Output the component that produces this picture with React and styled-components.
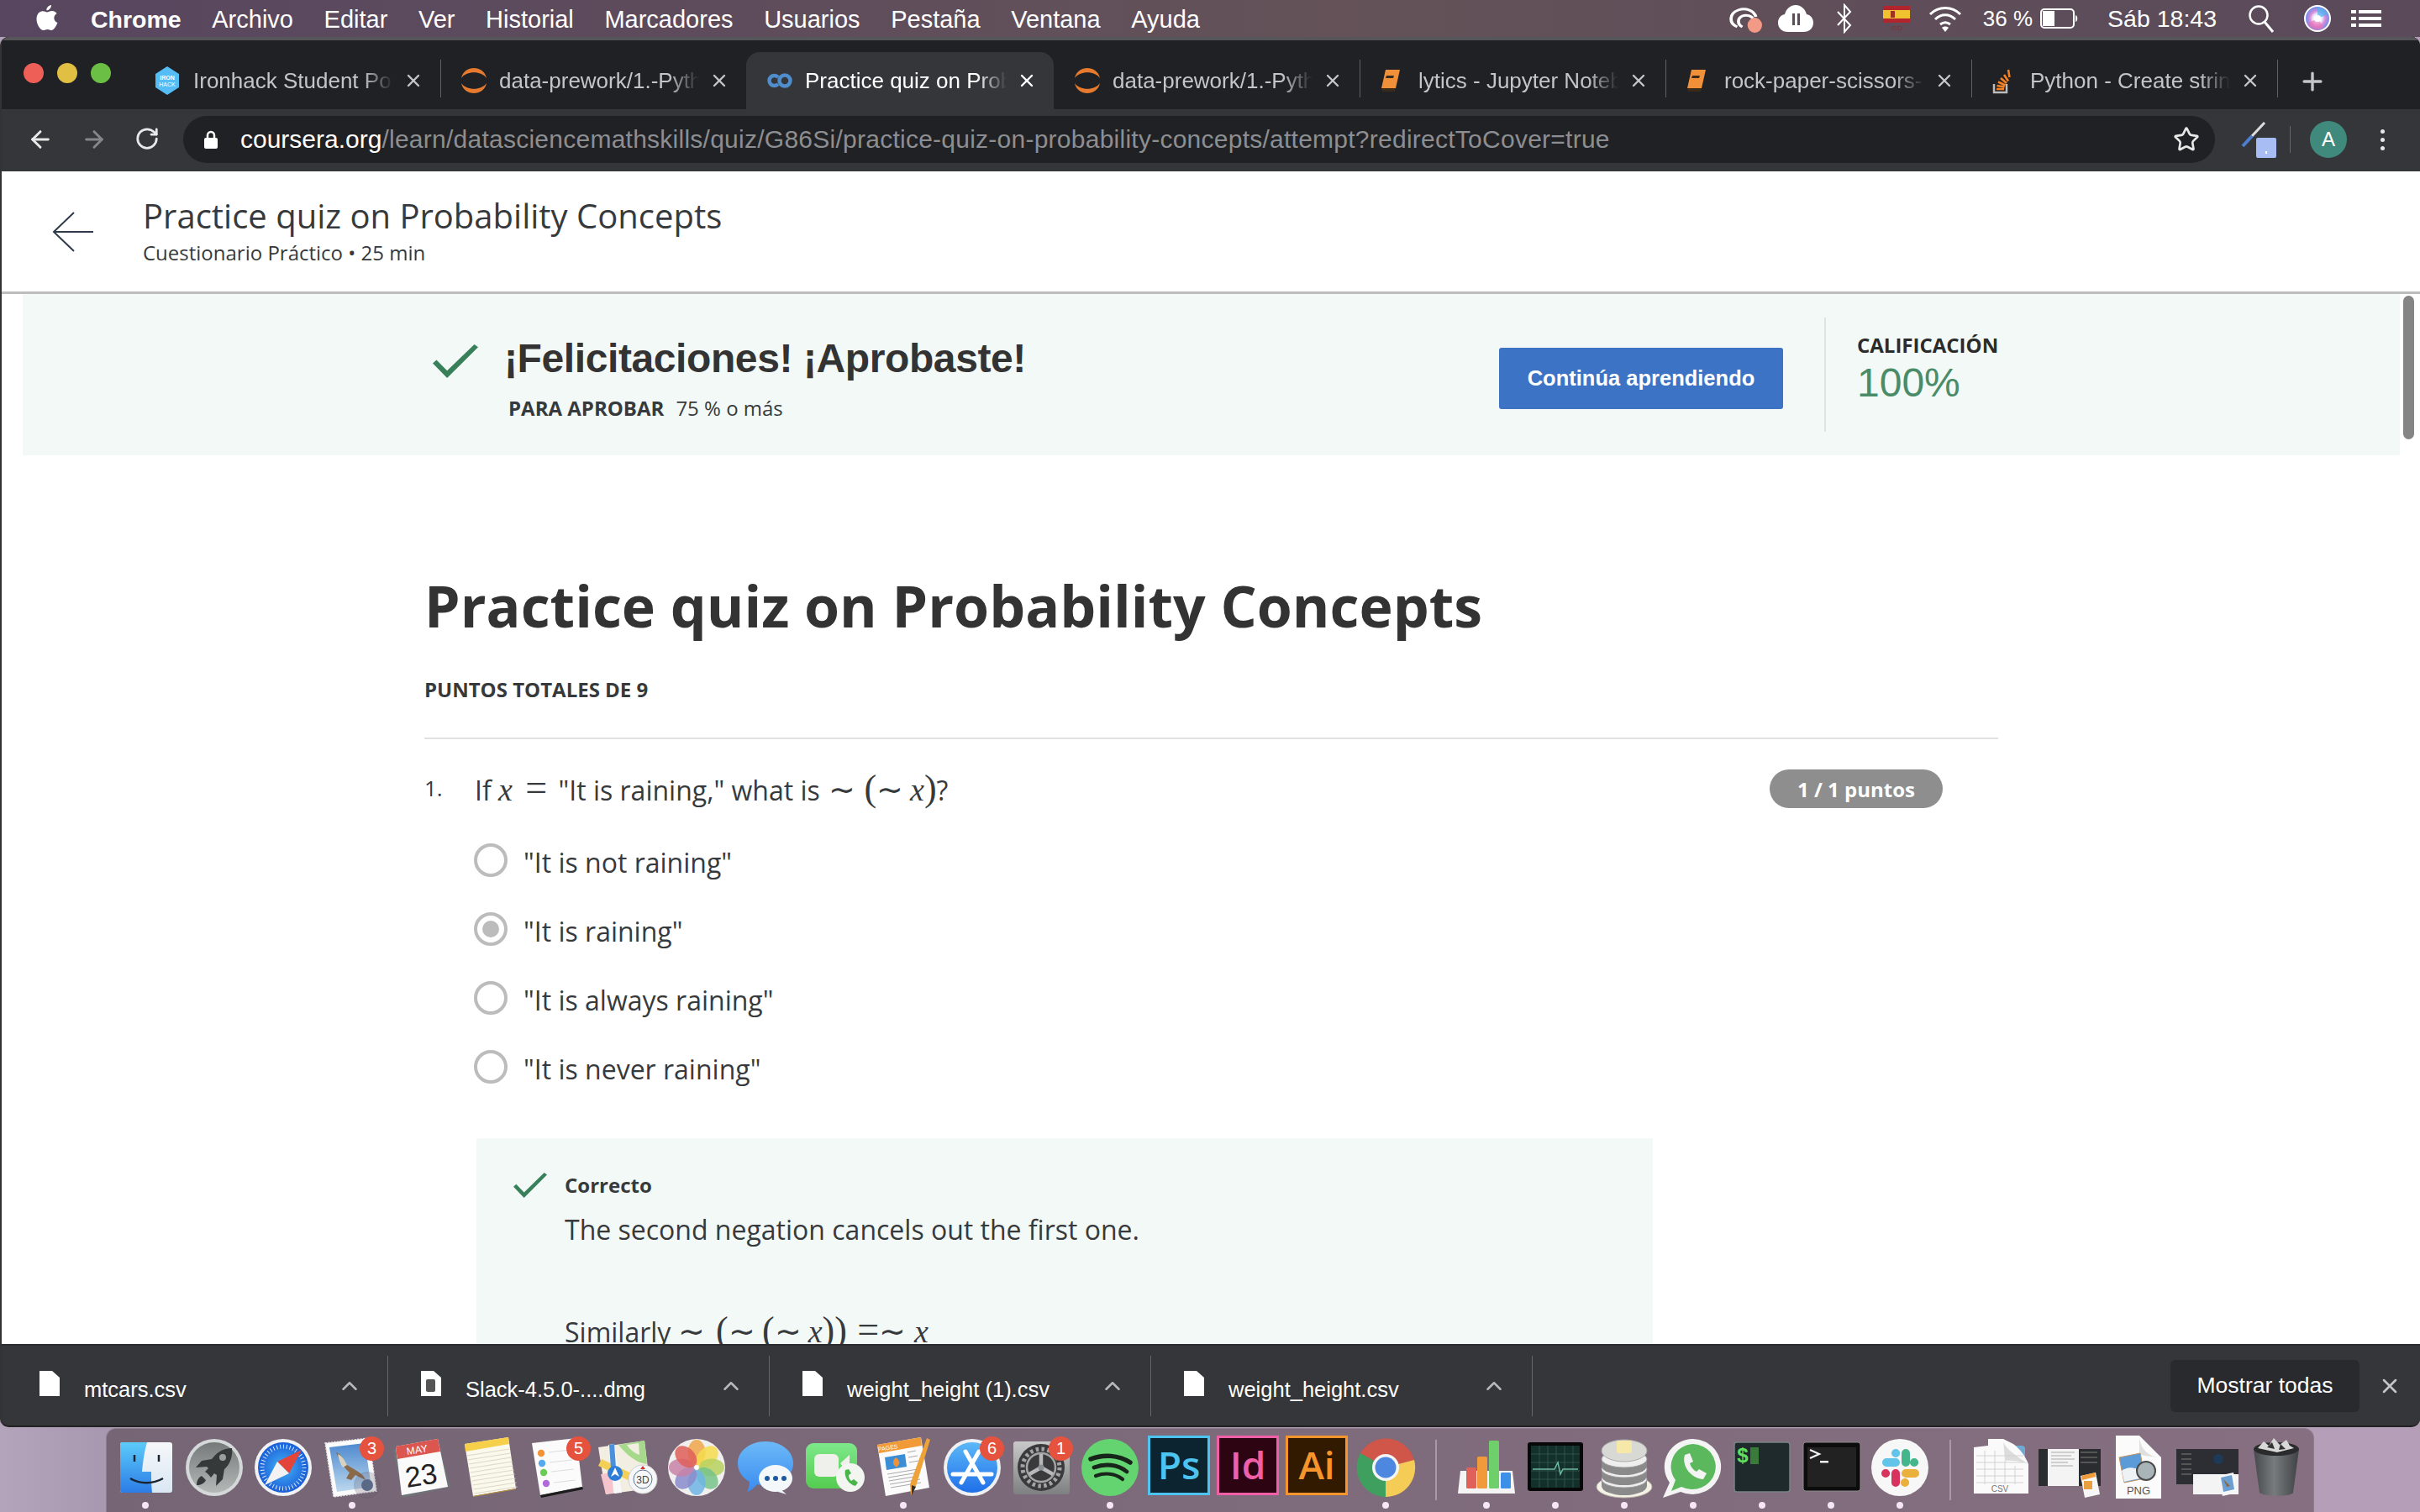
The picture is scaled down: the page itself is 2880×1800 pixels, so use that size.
import React from 'react';
import styled, { createGlobalStyle } from 'styled-components';
import { ArrowLeft, ArrowRight, RotateCw, Star, Plus, X, ChevronUp } from 'lucide-react';

const Global = createGlobalStyle`
  html, body { margin: 0; padding: 0; background: #b3a3bb; }
  * { box-sizing: border-box; }
`;

const UI = '"Liberation Sans", Arial, sans-serif';
const BODY = '"Open Sans", "Noto Sans", sans-serif';

/* ---------- menu bar drawings ---------- */
const AppleLogo = () => (
  <svg width="26" height="32" viewBox="0 0 26 32"><path fill="#fff" d="M18 0c.3 3-2.500 6.500-5.600 6.300C12 3.300 15 .3 18 0zM13 8.400c1.500 0 3.300-1.500 6-1.500 2 0 4.200 1 5.600 3-4.800 2.800-4 9.300.9 11.200-1.300 3.400-4.200 9-7.200 9-1.800 0-2.500-1.200-4.800-1.200s-3 1.200-4.800 1.200C5 30.100.500 23 .500 16.700.500 11 4 7.300 7.700 7.300c2.300 0 4 1.100 5.300 1.100z" /></svg>
);
const CloudApp = () => (
  <svg width="42" height="36" viewBox="0 0 34 36" preserveAspectRatio="none"><g fill="none" stroke="#fff" strokeWidth="3"><path d="M10 28C2 24 2 12 11 8c7-3 15 0 17 8" /><path d="M15 28c-5-3-5-10 0-13 4-2 9 0 10 3" /></g><ellipse cx="27" cy="26" rx="7" ry="9" fill="#f29a85" /></svg>
);
const CloudPause = () => (
  <svg width="42" height="34" viewBox="0 0 42 34"><path fill="#fff" d="M12 33C4 33 0 28 0 22c0-5 3-9 8-10C10 5 15 1 21 1s11 4 13 11c5 1 8 5 8 10 0 6-4 11-12 11z" /><rect x="17" y="11" width="3" height="14" fill="#5c4c5c" /><rect x="23" y="11" width="3" height="14" fill="#5c4c5c" /></svg>
);
const BluetoothMark = () => (
  <svg width="20" height="36" viewBox="0 0 20 36"><path fill="none" stroke="#fff" strokeWidth="2" d="M2 10l15 16-7 8V2l7 8L2 26" /></svg>
);
const SpainFlag = () => (
  <svg width="32" height="30" viewBox="0 0 32 30">
    <rect y="0" width="32" height="20" fill="#b3252c" /><rect y="5" width="32" height="10" fill="#f0c22f" /><rect x="9" y="6" width="5" height="8" fill="#a03020" />
    <text x="16" y="29" fontSize="8" textAnchor="middle" fill="#7d2d35" fontFamily={UI}>ISO</text>
  </svg>
);
const WifiMark = () => (
  <svg width="40" height="32" viewBox="0 0 40 32"><g fill="none" stroke="#fff" strokeWidth="3"><path d="M2 11c10-10 26-10 36 0" /><path d="M8 17c7-7 17-7 24 0" /><path d="M14 23c4-3 8-3 12 0" /></g><path fill="#fff" d="M20 32l-4-5c2-2 6-2 8 0z" /></svg>
);
const BatteryMark = () => (
  <svg width="46" height="26" viewBox="0 0 46 26"><rect x="1" y="2" width="39" height="22" rx="4" fill="none" stroke="#fff" strokeWidth="2" /><rect x="3" y="4" width="14" height="18" fill="#fff" /><path d="M42 9c3 1 3 7 0 8z" fill="#fff" /></svg>
);
const SearchMark = () => (
  <svg width="32" height="34" viewBox="0 0 32 34"><circle cx="13" cy="13" r="10.500" fill="none" stroke="#fff" strokeWidth="2.500" /><path d="M20 21l10 12" stroke="#fff" strokeWidth="3" /></svg>
);
const SiriOrb = () => (
  <svg width="32" height="32" viewBox="0 0 32 32">
    <defs>
      <radialGradient id="siriCore"><stop offset="0" stopColor="#fff" /><stop offset=".35" stopColor="#eef" /><stop offset=".6" stopColor="#d88ad8" /><stop offset="1" stopColor="#5a8ef0" /></radialGradient>
    </defs>
    <circle cx="16" cy="16" r="15" fill="url(#siriCore)" stroke="#fff" strokeWidth="2" />
    <path d="M16 3a13 13 0 0 1 12 8l-12 5z" fill="#45b8f2" opacity=".7" />
    <path d="M4 22a13 13 0 0 0 20 5l-8-11z" fill="#ee6fb0" opacity=".6" />
    <circle cx="16" cy="16" r="4" fill="#fff" />
  </svg>
);
const ListMark = () => (
  <svg width="36" height="20" viewBox="0 0 36 20"><g fill="#fff"><rect width="6" height="4" /><rect y="8" width="6" height="4" /><rect y="16" width="6" height="4" /><rect x="9" width="27" height="4" /><rect x="9" y="8" width="27" height="4" /><rect x="9" y="16" width="27" height="4" /></g></svg>
);

/* ---------- favicons ---------- */
const IronhackFav = () => (
  <svg width="30" height="34" viewBox="0 0 30 34"><path fill="#54bdf5" d="M15 0l14 9v16l-14 9-14-9V9z" /><text x="15" y="16" fontSize="7" fontWeight="700" textAnchor="middle" fill="#fff" fontFamily={UI}>IRON</text><text x="15" y="24" fontSize="7" textAnchor="middle" fill="#fff" fontFamily={UI}>HACK</text></svg>
);
const JupyterFav = () => (
  <svg width="32" height="32" viewBox="0 0 32 32"><path fill="#e67a2e" d="M1 13C4-3 28-3 31 13 25 4 7 4 1 13zM1 19c3 16 27 16 30 0-6 9-24 9-30 0z" /></svg>
);
const CourseraFav = () => (
  <svg width="32" height="18" viewBox="0 0 32 18"><g fill="none" stroke="#4f8dcc" strokeWidth="4.500"><path d="M14 5a6 6 0 1 0 0 8" /><circle cx="22" cy="9" r="6.500" /></g></svg>
);
const BookFav = () => (
  <svg width="26" height="28" viewBox="0 0 26 28"><path fill="#f0913a" d="M7 1h17l-5 22H2z" /><path fill="#3a2a1a" d="M8 8h9l-1 3H7zM2 23h17l-1 4H3z" /></svg>
);
const StackFav = () => (
  <svg width="24" height="32" viewBox="0 0 24 32"><path fill="none" stroke="#bcbbbb" strokeWidth="2.500" d="M3 20v10h15V20" /><path fill="none" stroke="#f48024" strokeWidth="2.600" d="M6 26h9M6.500 22l9 1.500M8 17.500l8.500 4M11 13l7 6M15 9l5 7.500M20 3l1.500 9" /></svg>
);

/* ---------- page drawings ---------- */
const Check = ({ w, h }) => (
  <svg width={w} height={h} viewBox="0 0 60 50" preserveAspectRatio="none"><path fill="#38805a" d="M55 0l5 4-41 46L0 28l5-5 14 16z" /></svg>
);
const BackArrow = () => (
  <svg width="50" height="48" viewBox="0 0 50 48"><path fill="none" stroke="#2f3a4a" strokeWidth="2" d="M26 1L2 24l24 23M2 24h47" /></svg>
);
const FileGlyph = ({ phone }) => (
  <svg width="24" height="30" viewBox="0 0 24 30"><path fill="#fff" d="M0 0h15l9 8v22H0z" />{phone && <rect x="6" y="10" width="11" height="15" rx="2" fill="#555" />}</svg>
);
const ExtensionPen = () => (
  <svg width="47" height="44" viewBox="0 0 47 44"><path d="M31 2L16 18" stroke="#ddd" strokeWidth="3" /><path d="M16 18L5 30" stroke="#4d7fd0" strokeWidth="4" /><rect x="21" y="20" width="24" height="24" rx="2" fill="#a9bdf5" /><rect x="32" y="36" width="2" height="3" fill="#fff" /></svg>
);

/* ---------- dock icons ---------- */
const Icon = ({ children }) => <DockSvg width="74" height="74" viewBox="0 0 74 74">{children}</DockSvg>;
const t = { fontFamily: UI, textAnchor: 'middle' };
const Grad = ({ id, from, to }) => (
  <defs><linearGradient id={id} x1="0" y1="0" x2="0" y2="1"><stop offset="0" stopColor={from} /><stop offset="1" stopColor={to} /></linearGradient></defs>
);

const Finder = () => (
  <Icon>
    <Grad id="fL" from="#5ccbf9" to="#2c7ce6" /><Grad id="fR" from="#f6f7f9" to="#d9e7f3" />
    <rect x="7" y="6" width="62" height="60" rx="3" fill="url(#fR)" />
    <path d="M10 6h29c-3 10-5 23-6 35h11c0 8 0 17 1 25H10a3 3 0 0 1-3-3V9a3 3 0 0 1 3-3z" fill="url(#fL)" />
    <path d="M24 21v8M53 21v8" stroke="#1a2430" strokeWidth="2.500" />
    <path d="M19 49c11 7 27 7 39 0" stroke="#1a2430" strokeWidth="2.500" fill="none" />
  </Icon>
);
const Launchpad = () => (
  <Icon>
    <Grad id="lp" from="#75797a" to="#b4b9b8" />
    <circle cx="37" cy="36" r="34" fill="#d4d8d8" /><circle cx="37" cy="36" r="30" fill="url(#lp)" />
    <path d="M58 13c-10 0-18 5-24 13l-12 2-7 8 13-1 2 2-4 4c3 2 5 4 7 7l4-5 3 2-1 13 8-8 2-12c7-6 10-15 9-25z" fill="#35393a" />
    <path d="M22 46c-4 2-6 6-6 11 5 0 9-2 11-6z" fill="#35393a" />
    <circle cx="47" cy="24" r="4" fill="#9a9e9e" />
  </Icon>
);
const Safari = () => (
  <Icon>
    <defs><radialGradient id="sf"><stop offset="0" stopColor="#45b4f6" /><stop offset="1" stopColor="#1a5ed8" /></radialGradient></defs>
    <circle cx="37" cy="36" r="34" fill="#f0f2f4" /><circle cx="37" cy="36" r="30" fill="url(#sf)" />
    <circle cx="37" cy="36" r="25" fill="none" stroke="#d8e8f8" strokeWidth="5" strokeDasharray="1 2.900" />
    <path d="M59 15L44 43 30 29z" fill="#e4453a" /><path d="M15 57l29-14-14-14z" fill="#f2f2f2" />
  </Icon>
);
const Mail = () => (
  <Icon>
    <Grad id="ml" from="#4e89cf" to="#bcd8ee" />
    <path d="M5 7l52-6 9 63-51 7z" fill="#fbfbfb" stroke="#e6e6e6" strokeWidth="1.500" strokeDasharray="2 1.500" />
    <path d="M10 12l42-5 8 52-41 6z" fill="url(#ml)" />
    <path d="M18 18c6 2 9 8 13 15 5 3 9 5 16 10 3 2 5 5 6 8l-12-6-5 6-6-2 4-7c-6-5-12-14-16-24z" fill="#8a6a48" />
    <path d="M20 20c5 2 8 7 11 13l-5 3c-3-4-5-10-6-16z" fill="#d8d2c4" />
    <circle cx="55" cy="57" r="15" fill="#6a6272" opacity=".25" stroke="#5e5666" strokeWidth="2" />
    <circle cx="55" cy="57" r="7" fill="#5a6a86" />
  </Icon>
);
const Calendar = () => (
  <Icon>
    <path d="M4 15l53-11 15 55-57 13z" fill="#6e7478" />
    <path d="M7 11l50-9 12 57-55 10z" fill="#fafafa" />
    <path d="M7 11l50-9 3 15-51 9z" fill="#dc5650" />
    <text x="33" y="19" fontSize="12" fill="#fff" {...t} transform="rotate(-9 33 19)">MAY</text>
    <text x="39" y="57" fontSize="34" fill="#222" {...t} transform="rotate(-9 39 57)">23</text>
  </Icon>
);
const Notes = () => (
  <Icon>
    <path d="M7 8l52-8 9 61-51 9z" fill="#fbf8ec" />
    <path d="M7 8l52-8 1 8-52 9z" fill="#f6d04a" />
    {[0, 1, 2, 3, 4, 5, 6, 7, 8, 9].map((i) => <path key={i} d={`M${9 + i}.5 ${22 + i * 5}l${51} -8`} stroke="#ddd8c6" strokeWidth="1" />)}
    <path d="M17 70l51-9v1l-51 9z" fill="#b8933f" />
  </Icon>
);
const Reminders = () => (
  <Icon>
    <path d="M5 7l53-6 7 58-50 10z" fill="#fbfbfb" />
    <path d="M15 69l50-10 1 3-50 10z" fill="#1c1c1c" />
    <circle cx="16" cy="19" r="4.200" fill="#f2933a" /><circle cx="17" cy="31" r="4.200" fill="#56a9ee" />
    <circle cx="19" cy="42" r="4.200" fill="#6acb55" /><circle cx="22" cy="55" r="4.200" fill="#b26ad8" />
    <path d="M25 18l26-3M26 30l27-3M28 41l27-3M31 54l26-3" stroke="#ddd" strokeWidth="1.200" />
  </Icon>
);
const Maps = () => (
  <Icon>
    <path d="M2 12l55-8 7 57-53 7z" fill="#f2eee2" />
    <path d="M26 9l31-5 3 28c-10-1-22-8-34-23z" fill="#a6d98c" />
    <path d="M36 9l14-2 1 14c-6-2-11-6-15-12z" fill="#f2eee2" />
    <path d="M4 30l50 24" stroke="#f3cf55" strokeWidth="9" />
    <path d="M5 44l13-2 2 24-9 2z" fill="#f5c4cc" />
    <path d="M14 9l7-1 9 58-9 1z" fill="#f8f8f8" /><path d="M15 9l6-1 2 28-6 1z" fill="#4a90dc" />
    <circle cx="22" cy="43" r="9" fill="#2c7ed8" /><path d="M22 36l5 11-5-3-5 3z" fill="#fff" />
    <circle cx="55" cy="50" r="17" fill="#f6f7f8" stroke="#d0d0d0" />
    <circle cx="55" cy="50" r="11" fill="none" stroke="#5b7890" strokeWidth="1" />
    <path d="M55 34l3 4h-6z" fill="#d8322a" />
    <text x="55" y="55" fontSize="12" fill="#444" {...t}>3D</text>
  </Icon>
);
const Photos = () => (
  <Icon>
    <circle cx="37" cy="36" r="34" fill="#f0f0ee" />
    {['#f0a84a', '#f6dc4e', '#b8d060', '#78c48a', '#6fb4e4', '#8a8ccc', '#c882a8', '#e0605a'].map((c, i) => (
      <ellipse key={c} cx="37" cy="18" rx="10.500" ry="15" fill={c} opacity=".86" transform={`rotate(${i * 45} 37 36)`} />
    ))}
    <circle cx="37" cy="36" r="2" fill="#fff" />
  </Icon>
);
const Messages = () => (
  <Icon>
    <Grad id="msg" from="#6cb9f8" to="#3a8cf0" />
    <path d="M37 5c18 0 33 11 33 26S55 57 37 57c-4 0-7 0-10-1-3 4-8 8-12 9 2-4 3-8 3-12C9 48 4 40 4 31 4 16 19 5 37 5z" fill="url(#msg)" />
    <ellipse cx="49" cy="49" rx="20" ry="16" fill="#f4f8fb" />
    <path d="M55 62l7 6-10-3z" fill="#f4f8fb" />
    <circle cx="39" cy="49" r="3" fill="#1f5aa0" /><circle cx="49" cy="49" r="3" fill="#1f5aa0" /><circle cx="59" cy="49" r="3" fill="#1f5aa0" />
  </Icon>
);
const FaceTime = () => (
  <Icon>
    <Grad id="ft" from="#7de88a" to="#55cc50" />
    <rect x="3" y="7" width="61" height="54" rx="9" fill="url(#ft)" />
    <rect x="13" y="20" width="29" height="27" rx="6" fill="#efefeb" />
    <path d="M44 31l11-10v24z" fill="#efefeb" />
    <circle cx="56" cy="48" r="17" fill="#f3f5f1" />
    <path d="M50 39c-2 8 4 17 12 19l3-4-5-4-3 2c-2-2-3-4-3-7l3-2-3-5z" fill="#47b548" />
  </Icon>
);
const Pages = () => (
  <Icon>
    <path d="M6 9l52-9 10 60-52 10z" fill="#fbfbfb" />
    <path d="M6 9l52-9 1 10-51 9z" fill="#f09a38" />
    <text x="19" y="15" fontSize="7" fill="#fff" {...t} transform="rotate(-9 19 15)">PAGES</text>
    <path d="M15 24l24-4 2 15-24 4z" fill="#3b8ed6" />
    <path d="M28 24c3 2 5 5 4 8l-3 4-3-3c-2-3-1-6 2-9z" fill="#f0923a" />
    {[0, 1, 2, 3, 4].map((i) => <path key={i} d={`M${18 + i} ${44 + i * 4}l${36} -6`} stroke="#aaa" strokeWidth="1" />)}
    <path d="M42 18l10-2M43 24l11-2M44 30l11-2" stroke="#aaa" strokeWidth="1" />
    <path d="M65 1l4 2-17 55-6 11-1-13z" fill="#eea338" /><path d="M47 57l5 2-5 10z" fill="#333" />
  </Icon>
);
const AppStore = () => (
  <Icon>
    <Grad id="as" from="#5cb8f8" to="#1f6fe8" />
    <circle cx="37" cy="36" r="34" fill="#eef0f2" /><circle cx="37" cy="36" r="30" fill="url(#as)" />
    <path d="M29 17l21 37M45 17L24 54M14 44h46" stroke="#fff" strokeWidth="5" strokeLinecap="round" />
  </Icon>
);
const SysPrefs = () => (
  <Icon>
    <Grad id="sp" from="#c9c9c9" to="#7d7f80" />
    <rect x="4" y="5" width="67" height="63" rx="3" fill="url(#sp)" />
    <circle cx="37" cy="36" r="28" fill="#3a3a3c" />
    <circle cx="37" cy="36" r="22" fill="none" stroke="#a4a4a4" strokeWidth="5" strokeDasharray="3.500 3.400" />
    <circle cx="37" cy="36" r="17" fill="#3a3a3c" stroke="#a4a4a4" strokeWidth="2.500" />
    <path d="M37 36V20M37 36L23 44M37 36l14 8" stroke="#b8b8ba" strokeWidth="4.500" />
    <circle cx="37" cy="36" r="3.500" fill="#8c8f92" />
  </Icon>
);
const Spotify = () => (
  <Icon>
    <circle cx="37" cy="36" r="34" fill="#63d470" />
    <g fill="none" stroke="#17251a" strokeLinecap="round">
      <path d="M14 26c15-6 33-5 47 4" strokeWidth="5.500" /><path d="M18 36c13-5 28-4 39 5" strokeWidth="4.800" /><path d="M20 46c11-4 23-3 32 4" strokeWidth="4.200" />
    </g>
  </Icon>
);
const Adobe = ({ bg, fg, label }) => (
  <Icon>
    <rect x="0" y="-2" width="74" height="71" fill={fg} />
    <rect x="3" y="1" width="68" height="65" fill={bg} />
    <text x="37" y="50" fontSize="46" fontWeight="600" fill={fg} textAnchor="middle" fontFamily={BODY}>{label}</text>
  </Icon>
);
const Chrome = () => (
  <Icon>
    <path d="M37 36L7 19A35 35 0 0 1 71 27z" fill="#d0564a" />
    <path d="M37 36l34-9A35 35 0 0 1 37 71z" fill="#f5cc55" />
    <path d="M37 36v35A35 35 0 0 1 7 19z" fill="#3f9f5f" />
    <circle cx="37" cy="36" r="16" fill="#f5f5f5" /><circle cx="37" cy="36" r="12.500" fill="#4d87e0" />
  </Icon>
);
const Numbers = () => (
  <Icon>
    <path d="M6 40h62l3 27H3z" fill="#f4f4f4" />
    <rect x="13" y="36" width="12" height="25" rx="1.500" fill="#e0605a" />
    <rect x="26" y="23" width="12" height="38" rx="1.500" fill="#f09a3c" />
    <rect x="40" y="4" width="12" height="57" rx="1.500" fill="#6fcf6a" />
    <rect x="54" y="42" width="12" height="19" rx="1.500" fill="#3c90e8" />
  </Icon>
);
const Activity = () => (
  <Icon>
    <rect x="4" y="6" width="66" height="58" rx="3" fill="#070707" />
    <rect x="8" y="10" width="58" height="50" fill="#14302b" />
    <path d="M8 20h58M8 30h58M8 40h58M8 50h58M18 10v50M28 10v50M38 10v50M48 10v50M58 10v50" stroke="#2c5248" strokeWidth="1" />
    <path d="M10 38h26l4-8 3 14 3-6h18" fill="none" stroke="#6fb8a0" strokeWidth="1.500" />
  </Icon>
);
const Sequel = () => (
  <Icon>
    <ellipse cx="37" cy="59" rx="33" ry="13" fill="#f4f1e6" stroke="#b8b4a8" />
    {[50, 38, 26].map((y) => (
      <g key={y}>
        <path d={`M10 ${y}v8a27 11 0 0 0 54 0v-8z`} fill="#8a8a8a" />
        <ellipse cx="37" cy={y} rx="27" ry="10" fill="#eeeeee" stroke="#a0a0a0" />
      </g>
    ))}
    <ellipse cx="37" cy="16" rx="27" ry="13" fill="#d8d8d4" stroke="#aaa" />
    <rect x="28" y="4" width="18" height="15" rx="2" fill="#f6e8a8" />
  </Icon>
);
const WhatsApp = () => (
  <Icon>
    <path d="M37 2a34 33 0 1 1-15 63L1 72l8-18A34 33 0 0 1 37 2z" fill="#f4f4f4" />
    <path d="M37 8a28 27 0 1 1-14 51l-12 5 5-13A28 27 0 0 1 37 8z" fill="#5cb85c" />
    <path d="M27 21c-4 14 8 28 22 29l4-7-9-5-3 3c-4-2-7-6-8-10l4-2-4-10z" fill="#f4f4f4" />
  </Icon>
);
const ITerm = () => (
  <Icon>
    <rect x="4" y="6" width="66" height="59" rx="3" fill="#1f2a2c" stroke="#7a8284" strokeWidth="1.500" />
    <text x="14" y="30" fontSize="24" fontWeight="700" fill="#5fe05f" {...t}>$</text>
    <rect x="23" y="12" width="10" height="20" fill="#3a7a3a" />
  </Icon>
);
const Terminal = () => (
  <Icon>
    <rect x="4" y="6" width="68" height="58" rx="3" fill="#0c0c0c" stroke="#8a8a8a" strokeWidth="1" />
    <rect x="9" y="12" width="58" height="47" fill="#222" />
    <path d="M12 15l11 5-11 5" fill="none" stroke="#f4f4f4" strokeWidth="2.200" />
    <rect x="24" y="28" width="10" height="2.500" fill="#f4f4f4" />
  </Icon>
);
const Slack = () => (
  <Icon>
    <circle cx="37" cy="36" r="34" fill="#f7f7f7" />
    <g strokeWidth="10" strokeLinecap="round" fill="none">
      <path d="M44 19v11M54 30h.1" stroke="#45b58c" />
      <path d="M21 30h11M32 19h.1" stroke="#63c4ea" />
      <path d="M32 43v11M20 43h.1" stroke="#d8325f" />
      <path d="M44 43h11M43 54h.1" stroke="#e9b13c" />
    </g>
  </Icon>
);
const DocCsv = () => (
  <Icon>
    <path d="M30 6h8l4 4h20a4 4 0 0 1 4 4v30H30z" fill="#6eaad4" />
    <path d="M5 12l17-2V2h18l12 6c8 6 14 14 18 24v35H5z" fill="#fafafa" />
    <path d="M40 2c0 8 6 14 30 30-10-4-22-5-28-4z" fill="#dcdcdc" />
    <path d="M8 22h56M8 30h56M8 38h56M8 46h56M8 54h56M18 16v40M30 16v40M42 28v28M54 34v22" stroke="#d2d2d2" strokeWidth="1" />
    <text x="36" y="65" fontSize="10" fill="#777" {...t}>CSV</text>
  </Icon>
);
const Thumb1 = () => (
  <Icon>
    <rect x="0" y="14" width="74" height="44" fill="#2a2c30" />
    <rect x="11" y="14" width="37" height="44" fill="#f4f4f4" />
    <path d="M15 18h28M15 22h24M15 26h28M15 30h20M15 34h26" stroke="#aaa" />
    <path d="M50 18h20M50 24h20M50 30h20" stroke="#555" strokeWidth="2" />
    <path d="M50 46l18-4 5 26-18 4z" fill="#f7f7f7" /><path d="M51 46l16-4 1 5-16 4z" fill="#f09a38" /><rect x="54" y="52" width="10" height="10" fill="#e9a040" />
  </Icon>
);
const DocPng = () => (
  <Icon>
    <path d="M10-2h28l26 26v49H10z" fill="#fbfbfb" />
    <path d="M38-2c0 14 10 26 26 26-8-1-20-1-26-4z" fill="#dfdfdf" />
    <path d="M14 24l25-5 6 30-25 5z" fill="#5b9bd8" stroke="#c49460" strokeWidth="1" />
    <path d="M17 40c8-6 14-4 24 0l3 8-24 5z" fill="#eef2f4" />
    <circle cx="46" cy="40" r="11" fill="#a8b4b8" stroke="#4a4a4a" strokeWidth="2" />
    <text x="37" y="68" fontSize="13" fill="#555" {...t}>PNG</text>
  </Icon>
);
const Thumb2 = () => (
  <Icon>
    <rect x="0" y="14" width="74" height="42" fill="#2c2e33" />
    <path d="M6 20h12M6 26h12M6 32h12M6 38h12M6 44h12" stroke="#555" strokeWidth="2" />
    <circle cx="50" cy="26" r="6" fill="#1d3a58" />
    <rect x="20" y="44" width="54" height="24" fill="#f4f4f4" />
    <path d="M50 46l18-4 5 24-18 4z" fill="#f6f6f6" /><path d="M53 48l13-3 3 17-13 3z" fill="#6c9fd0" />
    <path d="M56 50l8 8-4 1z" fill="#8a6a48" />
  </Icon>
);
const Trash = () => (
  <Icon>
    <defs><linearGradient id="tr" x1="0" y1="0" x2="1" y2="0"><stop offset="0" stopColor="#45494b" /><stop offset=".45" stopColor="#777b7d" /><stop offset="1" stopColor="#3e4244" /></linearGradient></defs>
    <path d="M10 14h54l-7 52c-3 5-34 5-40 0z" fill="url(#tr)" />
    <ellipse cx="37" cy="14" rx="27" ry="8" fill="#2a2b2d" />
    <path d="M15 13l7-8 6 5 6-9 7 8 8-6 4 7 5 3-20 5z" fill="#d8d8d8" />
    <path d="M26 12l6-6 3 8zM42 8l6 6-8 1z" fill="#333" />
  </Icon>
);

/* ---------- data ---------- */
const menus = ['Archivo', 'Editar', 'Ver', 'Historial', 'Marcadores', 'Usuarios', 'Pestaña', 'Ventana', 'Ayuda'];

const tabs = [
  { title: 'Ironhack Student Portal', Fav: IronhackFav },
  { title: 'data-prework/1.-Python', Fav: JupyterFav },
  { title: 'Practice quiz on Probability', Fav: CourseraFav, active: true },
  { title: 'data-prework/1.-Python', Fav: JupyterFav },
  { title: 'lytics - Jupyter Notebook', Fav: BookFav },
  { title: 'rock-paper-scissors-lizard', Fav: BookFav },
  { title: 'Python - Create string', Fav: StackFav },
];

const options = [
  { label: '"It is not raining"' },
  { label: '"It is raining"', picked: true },
  { label: '"It is always raining"' },
  { label: '"It is never raining"' },
];

const downloads = [
  { name: 'mtcars.csv' },
  { name: 'Slack-4.5.0-....dmg', phone: true },
  { name: 'weight_height (1).csv' },
  { name: 'weight_height.csv' },
];

const PsIcon = () => <Adobe bg="#0b2430" fg="#4dc3f0" label="Ps" />;
const IdIcon = () => <Adobe bg="#2c0412" fg="#f060a8" label="Id" />;
const AiIcon = () => <Adobe bg="#321a00" fg="#f7952d" label="Ai" />;

const dockLeft = [
  { id: 'finder', App: Finder, dot: true }, { id: 'launch', App: Launchpad }, { id: 'safari', App: Safari },
  { id: 'mail', App: Mail, dot: true, badge: 3 }, { id: 'cal', App: Calendar }, { id: 'notes', App: Notes },
  { id: 'rem', App: Reminders, badge: 5 }, { id: 'maps', App: Maps }, { id: 'photos', App: Photos },
  { id: 'msg', App: Messages }, { id: 'ft', App: FaceTime }, { id: 'pages', App: Pages, dot: true },
  { id: 'store', App: AppStore, badge: 6 }, { id: 'prefs', App: SysPrefs, badge: 1 }, { id: 'spotify', App: Spotify, dot: true },
  { id: 'ps', App: PsIcon }, { id: 'id', App: IdIcon }, { id: 'ai', App: AiIcon },
  { id: 'chrome', App: Chrome, dot: true },
];
const dockMiddle = [
  { id: 'numbers', App: Numbers, dot: true }, { id: 'activity', App: Activity, dot: true }, { id: 'sequel', App: Sequel, dot: true },
  { id: 'wa', App: WhatsApp, dot: true }, { id: 'iterm', App: ITerm, dot: true }, { id: 'term', App: Terminal, dot: true },
  { id: 'slack', App: Slack, dot: true },
];
const dockRight = [
  { id: 'csv', App: DocCsv }, { id: 't1', App: Thumb1 }, { id: 'png', App: DocPng }, { id: 't2', App: Thumb2 }, { id: 'trash', App: Trash },
];

/* ---------- page ---------- */
const Desktop = styled.div`
  width: 2880px;
  height: 1800px;
  overflow: hidden;
  display: flex;
  flex-direction: column;
  background: linear-gradient(90deg, #b3a3bb 0%, #a898b0 4%, #b59fb8 100%);
  font-family: ${BODY};
`;

const MenuBar = styled.header`
  height: 44px;
  flex: none;
  display: flex;
  align-items: center;
  padding: 0 46px 0 43px;
  color: #fff;
  font: 28px ${UI};
  background: linear-gradient(90deg, #584660 0%, #5e4c5c 30%, #645258 55%, #5a4a5a 100%);
`;
const MenuList = styled.nav`
  display: flex;
  margin-left: 39px;
  padding-top: 2px;
  gap: 36.600px;
  font-size: 29px;
  & > b { font-weight: 700; font-size: 28.500px; }
`;
const StatusArea = styled.div`
  margin-left: auto;
  display: flex;
  align-items: center;
  height: 44px;
`;
const StatusItem = styled.span`
  display: flex;
  align-items: center;
  margin-left: ${(p) => p.$gap}px;
  font-size: ${(p) => p.$size || 26}px;
`;

const Window = styled.div`
  height: 1655px;
  flex: none;
  display: flex;
  flex-direction: column;
  border-radius: 10px;
  overflow: hidden;
  border-left: 2px solid #333;
  border-bottom: 2px solid #222;
  background: #202124;
`;

const TabStrip = styled.div`
  height: 86px;
  flex: none;
  display: flex;
  align-items: flex-end;
  padding-left: 158px;
  position: relative;
  background: #202124;
  border-top: 4px solid #56565a;
`;
const Lights = styled.div`
  position: absolute;
  left: 26px;
  top: 27px;
  display: flex;
  gap: 16px;
`;
const Light = styled.i`
  width: 24px;
  height: 24px;
  border-radius: 50%;
  background: ${(p) => p.$c};
`;
const Tab = styled.div`
  width: ${(p) => (p.$active ? 366 : 364)}px;
  height: 68px;
  display: flex;
  align-items: center;
  padding: 0 20px 0 24px;
  position: relative;
  border-radius: 16px 16px 0 0;
  background: ${(p) => (p.$active ? '#35363a' : 'transparent')};
  color: ${(p) => (p.$active ? '#fff' : '#c4c5c7')};
`;
const TabSep = styled.span`
  position: absolute;
  right: -1px;
  top: 9px;
  bottom: 14px;
  width: 1px;
  background: #5f6064;
`;
const FavSlot = styled.span`
  width: 46px;
  flex: none;
  display: flex;
  align-items: center;
`;
const TabTitle = styled.span`
  flex: 1;
  overflow: hidden;
  white-space: nowrap;
  font: 26px ${UI};
  -webkit-mask-image: linear-gradient(90deg, #000 85%, transparent 100%);
  mask-image: linear-gradient(90deg, #000 85%, transparent 100%);
`;
const TabClose = styled.span`
  display: flex;
  margin-left: 12px;
`;
const NewTab = styled.span`
  display: flex;
  margin: 0 0 16px 25px;
  color: #c4c5c7;
`;

const ToolBar = styled.div`
  height: 74px;
  flex: none;
  display: flex;
  align-items: center;
  padding: 0 22px 2px 30px;
  background: #35363a;
  color: #e8e8e8;
`;
const NavButtons = styled.div`
  display: flex;
  gap: 32px;
  margin-right: 28px;
  & > svg:nth-child(2) { color: #85868a; }
`;
const UrlPill = styled.div`
  width: 2418px;
  height: 56px;
  border-radius: 28px;
  background: #202124;
  display: flex;
  align-items: center;
  padding: 0 18px 0 25px;
  font: 30px ${UI};
`;
const LockBox = styled.span`
  display: flex;
  width: 43px;
`;
const Host = styled.span`
  color: #fff;
`;
const Path = styled.span`
  color: #8d8e91;
  letter-spacing: 0.25px;
`;
const PillStar = styled.span`
  margin-left: auto;
  display: flex;
`;
const ToolRight = styled.div`
  display: flex;
  align-items: center;
  margin-left: 28px;
`;
const ToolDivider = styled.span`
  width: 1px;
  height: 32px;
  background: #66676a;
  margin: 0 23px 0 14px;
`;
const Avatar = styled.span`
  width: 44px;
  height: 44px;
  border-radius: 50%;
  background: #3f8a7c;
  color: #fff;
  font: 24px ${UI};
  display: flex;
  align-items: center;
  justify-content: center;
`;
const MoreDots = styled.span`
  display: flex;
  flex-direction: column;
  gap: 5px;
  margin-left: 40px;
  & > i { width: 5px; height: 5px; border-radius: 50%; background: #e8e8e8; }
`;

const Page = styled.main`
  flex: 1;
  min-height: 0;
  overflow: hidden;
  background: #fff;
  display: flex;
  flex-direction: column;
  position: relative;
`;
const PageHeader = styled.div`
  height: 146px;
  flex: none;
  display: flex;
  align-items: flex-start;
  padding: 48px 0 0 60px;
  border-bottom: 3px solid #bdbdbd;
`;
const HeaderText = styled.div`
  margin-left: 58px;
  margin-top: -24px;
  color: #373a3c;
`;
const HeaderTitle = styled.div`
  font-size: 40px;
  line-height: 58px;
`;
const HeaderSub = styled.div`
  font-size: 24px;
  line-height: 32px;
  margin-top: -1px;
`;
const ScrollThumb = styled.div`
  position: absolute;
  right: 7px;
  top: 148px;
  width: 13px;
  height: 171px;
  border-radius: 7px;
  background: #858585;
`;

const Banner = styled.section`
  height: 192px;
  flex: none;
  margin: 0 24px 0 25px;
  background: #f3f9f7;
  display: flex;
  align-items: center;
  padding-left: 488px;
`;
const BannerMain = styled.div`
  display: flex;
  width: 1269px;
  margin-top: 4px;
`;
const BannerCheck = styled.div`
  padding-top: 14px;
  margin-right: 31px;
`;
const BannerTitle = styled.div`
  font: 700 48px/60px ${UI};
  letter-spacing: -0.4px;
  color: #333;
  padding-top: 1px;
`;
const PassLine = styled.div`
  margin: 14px 0 0 5px;
  font-size: 24px;
  line-height: 30px;
  color: #373a3c;
  & > b { margin-right: 14px; font-weight: 700; }
`;
const Continue = styled.div`
  width: 338px;
  height: 73px;
  margin-top: 8px;
  border-radius: 3px;
  background: #3d73c5;
  color: #fff;
  font: 700 25.500px ${UI};
  display: flex;
  align-items: center;
  justify-content: center;
`;
const ScoreBox = styled.div`
  margin-left: 49px;
  height: 136px;
  border-left: 2px solid #dfe3e2;
  padding: 16px 0 0 37px;
`;
const ScoreLabel = styled.div`
  font-size: 24px;
  font-weight: 700;
  line-height: 34px;
  color: #2b2b2b;
  margin-bottom: 3px;
`;
const ScoreValue = styled.div`
  font: 48px/50px ${UI};
  color: #4a8c68;
`;

const Content = styled.article`
  padding: 133px 0 0 503px;
  width: 2376px;
  color: #373a3c;
`;
const QuizTitle = styled.h1`
  margin: 0;
  font-size: 68px;
  line-height: 92px;
  font-weight: 700;
  color: #333;
`;
const TotalPoints = styled.div`
  margin-top: 37px;
  font-size: 24px;
  line-height: 34px;
  font-weight: 700;
  padding-bottom: 40px;
  border-bottom: 2px solid #e1e1e1;
`;
const QuestionRow = styled.div`
  display: flex;
  align-items: center;
  height: 56px;
  margin-top: 33px;
  padding-right: 66px;
`;
const QuestionNo = styled.span`
  width: 60px;
  font-size: 26px;
  margin-top: -6px;
`;
const QuestionText = styled.span`
  font-size: 32px;
  line-height: 56px;
  white-space: nowrap;
`;
const Mth = styled.span`
  font-family: "Liberation Serif", serif;
  font-style: ${(p) => (p.$up ? 'normal' : 'italic')};
  font-size: ${(p) => p.$size || 38}px;
  line-height: 1;
  margin: 0 ${(p) => p.$r || 0}px 0 ${(p) => p.$l || 0}px;
`;
const PointsPill = styled.span`
  margin-left: auto;
  margin-top: -4px;
  width: 206px;
  height: 46px;
  border-radius: 23px;
  background: #8e8e8e;
  color: #fff;
  font-size: 24px;
  font-weight: 700;
  display: flex;
  align-items: center;
  justify-content: center;
`;
const Options = styled.div`
  margin: 25px 0 0 59px;
  display: flex;
  flex-direction: column;
  gap: 22px;
`;
const Option = styled.label`
  display: flex;
  align-items: center;
  height: 60px;
  font-size: 32px;
`;
const OptionText = styled.span`
  padding-top: 4px;
`;
const Radio = styled.span`
  width: 40px;
  height: 40px;
  flex: none;
  border-radius: 50%;
  border: 4px solid #bcbcbc;
  margin-right: 19px;
  display: flex;
  align-items: center;
  justify-content: center;
  &::after {
    content: '';
    display: ${(p) => (p.$on ? 'block' : 'none')};
    width: 20px;
    height: 20px;
    border-radius: 50%;
    background: #bcbcbc;
  }
`;
const Feedback = styled.div`
  margin: 55px 0 0 62px;
  width: 1400px;
  height: 400px;
  background: #f3f9f7;
  padding: 38px 0 0 44px;
  display: flex;
`;
const FeedCheck = styled.div`
  width: 61px;
  flex: none;
  padding-top: 3px;
`;
const FeedLabel = styled.div`
  font-size: 24px;
  line-height: 36px;
  font-weight: 700;
`;
const FeedText = styled.div`
  font-size: 32px;
  line-height: 44px;
  margin-top: 13px;
`;
const FeedMath = styled.div`
  font-size: 32px;
  line-height: 44px;
  margin-top: 74px;
  white-space: nowrap;
`;

const DownloadBar = styled.footer`
  height: 97px;
  flex: none;
  display: flex;
  align-items: center;
  padding: 0 0 0 6px;
  background: #35363a;
  color: #fff;
  border-top: 2px solid #2a2b2e;
`;
const DownloadItem = styled.div`
  width: 454px;
  height: 72px;
  display: flex;
  align-items: center;
  padding: 0 30px 0 39px;
  border-right: 1px solid #66676a;
  font: 25.500px ${UI};
`;
const FileSlot = styled.span`
  width: 53px;
  margin-top: -5px;
  display: flex;
`;
const FileName = styled.span`
  flex: 1;
  padding-top: 9px;
`;
const Caret = styled.span`
  display: flex;
  color: #b8b8ba;
`;
const ShowAll = styled.div`
  margin-left: auto;
  width: 225px;
  height: 62px;
  border-radius: 6px;
  background: #292a2d;
  font: 26.500px ${UI};
  display: flex;
  align-items: center;
  justify-content: center;
`;
const BarClose = styled.span`
  display: flex;
  margin: 0 22px;
  color: #c4c5c7;
`;

const Dock = styled.div`
  margin: 1px 0 0 126px;
  width: 2628px;
  flex: 1;
  display: flex;
  padding: 10px 0 0 5px;
  border-radius: 12px 12px 0 0;
  background: linear-gradient(90deg, #756575, #7d6a7a 50%, #856f80);
  border: 1px solid #8f7f90;
  border-bottom: 0;
`;
const DockCell = styled.div`
  width: 82px;
  height: 88px;
  flex: none;
  position: relative;
  display: flex;
  flex-direction: column;
  align-items: center;
`;
const DockSvg = styled.svg`
  overflow: visible;
  flex: none;
`;
const Badge = styled.span`
  position: absolute;
  top: -1px;
  right: 3px;
  width: 29px;
  height: 29px;
  border-radius: 50%;
  background: #e5533f;
  color: #fff;
  font: 20px/29px ${UI};
  text-align: center;
`;
const DockDot = styled.i`
  width: 8px;
  height: 8px;
  border-radius: 50%;
  margin-top: 3px;
  background: ${(p) => (p.$on ? '#f6e6f6' : 'transparent')};
`;
const DockSep = styled.span`
  width: 2px;
  height: 72px;
  margin: 3px 18px 0;
  background: #a998a8;
`;

const DockApp = ({ App, dot, badge }) => (
  <DockCell>
    <App />
    {badge && <Badge>{badge}</Badge>}
    <DockDot $on={dot} />
  </DockCell>
);

export default function App() {
  return (
    <>
      <Global />
      <Desktop>
        <MenuBar>
          <AppleLogo />
          <MenuList>
            <b>Chrome</b>
            {menus.map((m) => <span key={m}>{m}</span>)}
          </MenuList>
          <StatusArea>
            <StatusItem $gap={0}><CloudApp /></StatusItem>
            <StatusItem $gap={19}><CloudPause /></StatusItem>
            <StatusItem $gap={27}><BluetoothMark /></StatusItem>
            <StatusItem $gap={36}><SpainFlag /></StatusItem>
            <StatusItem $gap={22}><WifiMark /></StatusItem>
            <StatusItem $gap={25}>36 %</StatusItem>
            <StatusItem $gap={9}><BatteryMark /></StatusItem>
            <StatusItem $gap={34} $size={28.5}>Sáb 18:43</StatusItem>
            <StatusItem $gap={37}><SearchMark /></StatusItem>
            <StatusItem $gap={35}><SiriOrb /></StatusItem>
            <StatusItem $gap={24}><ListMark /></StatusItem>
          </StatusArea>
        </MenuBar>

        <Window>
          <TabStrip>
            <Lights>
              <Light $c="#ee5f57" /><Light $c="#e0bf43" /><Light $c="#6cbf45" />
            </Lights>
            {tabs.map((tab, i) => (
              <Tab key={i} $active={tab.active}>
                <FavSlot><tab.Fav /></FavSlot>
                <TabTitle>{tab.title}</TabTitle>
                <TabClose><X size={24} strokeWidth={2.4} /></TabClose>
                {!tab.active && i !== 1 && <TabSep />}
              </Tab>
            ))}
            <NewTab><Plus size={34} strokeWidth={2.4} /></NewTab>
          </TabStrip>

          <ToolBar>
            <NavButtons>
              <ArrowLeft size={32} strokeWidth={2.2} />
              <ArrowRight size={32} strokeWidth={2.2} />
              <RotateCw size={30} strokeWidth={2.2} />
            </NavButtons>
            <UrlPill>
              <LockBox>
                <svg width="16" height="22" viewBox="0 0 16 22"><path fill="none" stroke="#fff" strokeWidth="2.500" d="M4 10V6a4 4 0 0 1 8 0v4" /><rect y="9" width="16" height="13" rx="2" fill="#fff" /></svg>
              </LockBox>
              <Host>coursera.org</Host>
              <Path>/learn/datasciencemathskills/quiz/G86Si/practice-quiz-on-probability-concepts/attempt?redirectToCover=true</Path>
              <PillStar><Star size={32} strokeWidth={2} /></PillStar>
            </UrlPill>
            <ToolRight>
              <ExtensionPen />
              <ToolDivider />
              <Avatar>A</Avatar>
              <MoreDots><i /><i /><i /></MoreDots>
            </ToolRight>
          </ToolBar>

          <Page>
            <PageHeader>
              <BackArrow />
              <HeaderText>
                <HeaderTitle>Practice quiz on Probability Concepts</HeaderTitle>
                <HeaderSub>Cuestionario Práctico • 25 min</HeaderSub>
              </HeaderText>
            </PageHeader>
            <ScrollThumb />
            <Banner>
              <BannerMain>
                <BannerCheck><Check w={54} h={40} /></BannerCheck>
                <div>
                  <BannerTitle>¡Felicitaciones! ¡Aprobaste!</BannerTitle>
                  <PassLine><b>PARA APROBAR</b>75 % o más</PassLine>
                </div>
              </BannerMain>
              <Continue>Continúa aprendiendo</Continue>
              <ScoreBox>
                <ScoreLabel>CALIFICACIÓN</ScoreLabel>
                <ScoreValue>100%</ScoreValue>
              </ScoreBox>
            </Banner>

            <Content>
              <QuizTitle>Practice quiz on Probability Concepts</QuizTitle>
              <TotalPoints>PUNTOS TOTALES DE 9</TotalPoints>
              <QuestionRow>
                <QuestionNo>1.</QuestionNo>
                <QuestionText>
                  If <Mth>x</Mth> <Mth $up $size={46} $l={7} $r={5}>=</Mth> "It is raining," what is <Mth $up $l={2} $r={2}>∼</Mth> <Mth $up $size={44}>(</Mth><Mth $up>∼</Mth><Mth $l={8}>x</Mth><Mth $up $size={44}>)</Mth>?
                </QuestionText>
                <PointsPill>1 / 1 puntos</PointsPill>
              </QuestionRow>
              <Options>
                {options.map((o) => (
                  <Option key={o.label}>
                    <Radio $on={o.picked} />
                    <OptionText>{o.label}</OptionText>
                  </Option>
                ))}
              </Options>
              <Feedback>
                <FeedCheck><Check w={40} h={30} /></FeedCheck>
                <div>
                  <FeedLabel>Correcto</FeedLabel>
                  <FeedText>The second negation cancels out the first one.</FeedText>
                  <FeedMath>
                    Similarly <Mth $up $r={5}>∼</Mth> <Mth $up $size={44}>(</Mth><Mth $up>∼</Mth> <Mth $up $size={44}>(</Mth><Mth $up>∼</Mth><Mth $l={8}>x</Mth><Mth $up $size={44}>))</Mth> <Mth $up $size={46} $l={4}>=</Mth><Mth $up>∼</Mth><Mth $l={10}>x</Mth>
                  </FeedMath>
                </div>
              </Feedback>
            </Content>
          </Page>

          <DownloadBar>
            {downloads.map((d) => (
              <DownloadItem key={d.name}>
                <FileSlot><FileGlyph phone={d.phone} /></FileSlot>
                <FileName>{d.name}</FileName>
                <Caret><ChevronUp size={30} strokeWidth={2} /></Caret>
              </DownloadItem>
            ))}
            <ShowAll>Mostrar todas</ShowAll>
            <BarClose><X size={28} strokeWidth={2.2} /></BarClose>
          </DownloadBar>
        </Window>

        <Dock>
          {dockLeft.map((a) => <DockApp key={a.id} {...a} />)}
          <DockSep />
          {dockMiddle.map((a) => <DockApp key={a.id} {...a} />)}
          <DockSep />
          {dockRight.map((a) => <DockApp key={a.id} {...a} />)}
        </Dock>
      </Desktop>
    </>
  );
}
